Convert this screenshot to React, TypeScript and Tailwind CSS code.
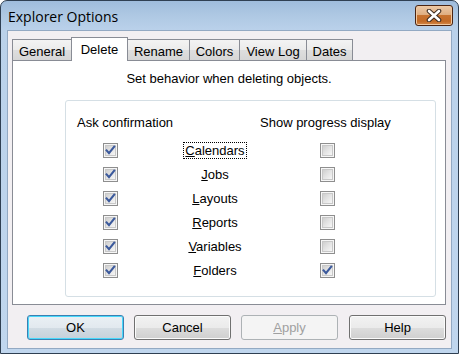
import React from "react";

const font = { fontFamily: '"Liberation Sans", Arial, sans-serif' };

function Check({ checked }: { checked: boolean }) {
  return (
    <div className="w-[15px] h-[15px] border border-[#8e8e8e] bg-[#f6f6f6] p-px">
      <div className="relative w-full h-full bg-[linear-gradient(135deg,#cfcfcf_0%,#e2e2e2_45%,#f6f6f6_100%)] border border-[#c8c8c8]">
        {checked && (
          <svg className="absolute -left-[1px] -top-[1px]" width="11" height="11" viewBox="0 0 11 11">
            <path d="M1.6 5.4 L4 8.2 L9.2 1.6" fill="none" stroke="#3c5a9c" strokeWidth="2.1" strokeLinecap="square" />
          </svg>
        )}
      </div>
    </div>
  );
}

function Tab({ label, w, selected, first }: { label: string; w: string; selected?: boolean; first?: boolean }) {
  if (selected) {
    return (
      <div
        className={`${w} -ml-px h-[24px] -mb-px relative z-10 bg-white border border-b-0 border-[#898c95] flex items-start justify-center pt-[4px] text-[13px] leading-[15px] text-black`}
      >
        {label}
      </div>
    );
  }
  return (
    <div
      className={`${w} ${first ? "" : "-ml-px"} h-[21px] border border-b-0 border-[#898c95] bg-[linear-gradient(#f3f3f3_0%,#ebebeb_50%,#dedede_51%,#d6d6d6_100%)] flex items-start justify-center pt-[4px] text-[13px] leading-[15px] text-black`}
    >
      {label}
    </div>
  );
}

function Btn({ children, variant, extra }: { children: React.ReactNode; variant?: "default" | "disabled"; extra?: string }) {
  let cls =
    "border-[#707070] bg-[linear-gradient(#f2f2f2_0%,#ebebeb_50%,#dddddd_51%,#cfcfcf_100%)] shadow-[inset_0_0_0_1px_#fbfbfb] text-black";
  if (variant === "default")
    cls =
      "border-[#3c7fb1] bg-[linear-gradient(#eaf0f5_0%,#e2e9ef_50%,#d2dce4_51%,#c6d1da_100%)] shadow-[inset_0_0_0_1px_#48d8fb] text-black";
  if (variant === "disabled") cls = "border-[#adb2b5] bg-[#f4f4f4] text-[#a0a0a0]";
  return (
    <div
      className={`w-[97px] h-[25px] rounded-[3px] border ${cls} ${extra ?? ""} flex items-center justify-center text-[13px] leading-[15px]`}
    >
      {children}
    </div>
  );
}

const rows: { first: string; rest: string; left: boolean; right: boolean; focus?: boolean }[] = [
  { first: "C", rest: "alendars", left: true, right: false, focus: true },
  { first: "J", rest: "obs", left: true, right: false },
  { first: "L", rest: "ayouts", left: true, right: false },
  { first: "R", rest: "eports", left: true, right: false },
  { first: "V", rest: "ariables", left: true, right: false },
  { first: "F", rest: "olders", left: true, right: true },
];

export default function App() {
  return (
    <div
      style={font}
      className="w-[459px] h-[354px] flex flex-col rounded-t-[7px] border border-[#2f3f52] bg-[linear-gradient(180deg,#9fbcdc_0px,#aec8e3_14px,#bad1ea_29px,#c0d6ee_100%)] overflow-hidden"
    >
      {/* title bar */}
      <div className="h-[29px] shrink-0 flex items-center justify-between pl-[7px] pr-[5px]">
        <div className="pt-[2px] text-[14px] leading-[18px] text-black" style={{ fontFamily: '"Open Sans", "Liberation Sans", sans-serif' }}>
          Explorer Options
        </div>
        <div className="w-[38px] h-[21px] rounded-[3px] border border-[#4a2412] bg-[linear-gradient(#ecc9a6_0%,#dfae82_45%,#c7722f_50%,#c26a26_80%,#d5894a_100%)] shadow-[inset_0_0_0_1px_#f0c8a0] flex items-center justify-center">
          <svg width="16" height="13" viewBox="0 0 16 13">
            <path d="M3 2 L13 11 M13 2 L3 11" stroke="#3a2a20" strokeWidth="4.6" strokeLinecap="round" />
            <path d="M3 2 L13 11 M13 2 L3 11" stroke="#ffffff" strokeWidth="2.6" strokeLinecap="round" />
          </svg>
        </div>
      </div>

      {/* client area */}
      <div className="mx-[6px] h-[319px] shrink-0 border border-[#93a9c3] bg-[#f2eff2] flex flex-col">
        {/* tabs */}
        <div className="mt-[6px] ml-[4px] h-[23px] flex items-end">
          <Tab label="General" w="w-[60px]" first />
          <Tab label="Delete" w="w-[57px]" selected />
          <Tab label="Rename" w="w-[63px]" />
          <Tab label="Colors" w="w-[51px]" />
          <Tab label="View Log" w="w-[68px]" />
          <Tab label="Dates" w="w-[47px]" />
        </div>

        {/* panel */}
        <div className="ml-[4px] w-[434px] h-[245px] bg-white border border-[#898c95] flex flex-col">
          <div className="pt-[10px] text-center text-[13px] leading-[15px] text-black">
            Set behavior when deleting objects.
          </div>
          <div className="mt-[14px] ml-[52px] w-[371px] h-[197px] border border-[#d5dfe5] rounded-[3px] flex flex-col">
            <div className="pt-[14px] grid grid-cols-[194px_1fr] text-[13px] leading-[15px] text-black">
              <div className="pl-[11px]">Ask confirmation</div>
              <div>Show progress display</div>
            </div>
            <div className="mt-[8px] flex flex-col">
              {rows.map((r) => (
                <div key={r.first} className="h-[24px] grid grid-cols-[104px_90px_1fr] items-center">
                  <div className="pl-[37px]">
                    <Check checked={r.left} />
                  </div>
                  <div className="flex justify-center">
                    <span
                      className={`text-[13px] leading-[15px] text-black px-px ${
                        r.focus ? "border border-dotted border-black" : "border border-transparent"
                      }`}
                    >
                      <u>{r.first}</u>
                      {r.rest}
                    </span>
                  </div>
                  <div className="pl-[60px]">
                    <Check checked={r.right} />
                  </div>
                </div>
              ))}
            </div>
          </div>
        </div>

        {/* buttons */}
        <div className="mt-[10px] ml-[19px] flex gap-[10px]">
          <Btn variant="default">OK</Btn>
          <Btn>Cancel</Btn>
          <Btn variant="disabled">
            <span>
              <u>A</u>pply
            </span>
          </Btn>
          <Btn extra="ml-px">Help</Btn>
        </div>
      </div>
    </div>
  );
}
